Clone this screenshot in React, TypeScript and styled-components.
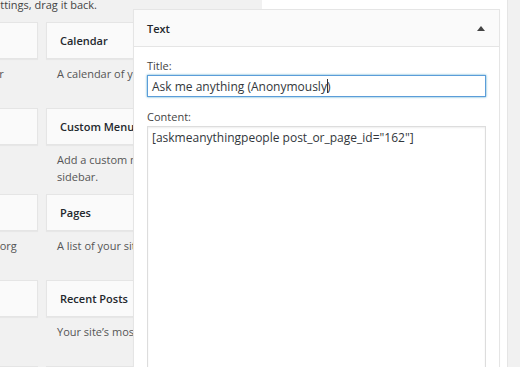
import styled, { createGlobalStyle } from 'styled-components';

const GlobalStyle = createGlobalStyle`
  html, body { margin: 0; padding: 0; }
  body {
    font-family: "Open Sans", "Liberation Sans", sans-serif;
    font-size: 11px;
    color: #444;
  }
`;

type Widget = { title: string; desc: string };

const rows: [Widget, Widget][] = [
  [
    { title: 'Archives', desc: 'A monthly archive of your site’s Posts.' },
    { title: 'Calendar', desc: 'A calendar of your site’s Posts.' },
  ],
  [
    { title: 'Categories', desc: 'A list or dropdown of categories.' },
    { title: 'Custom Menu', desc: 'Add a custom menu to your sidebar.' },
  ],
  [
    { title: 'Meta', desc: 'Login, RSS, & WordPress.org links.' },
    { title: 'Pages', desc: 'A list of your site’s Pages.' },
  ],
  [
    { title: 'Recent Comments', desc: 'Your site’s most recent comments.' },
    { title: 'Recent Posts', desc: 'Your site’s most recent Posts.' },
  ],
  [
    { title: 'RSS', desc: 'Entries from any RSS or Atom feed.' },
    { title: 'Search', desc: 'A search form for your site.' },
  ],
];

export default function App() {
  return (
    <>
      <GlobalStyle />
      <Screen>
        <Available>
          <Intro>
            <span>To activate a widget drag it to a sidebar. To deactivate a widget and delete its settings, drag it back.</span>
          </Intro>
          <WidgetGrid>
            {rows.flat().map((w) => (
              <WidgetItem key={w.title}>
                <WidgetTop>
                  <WidgetName>{w.title}</WidgetName>
                </WidgetTop>
                <Description>{w.desc}</Description>
              </WidgetItem>
            ))}
          </WidgetGrid>
        </Available>

        <Sidebar>
          <OpenWidget>
            <PanelHeader>
              <PanelTitle>Text</PanelTitle>
              <ToggleArrow />
            </PanelHeader>
            <PanelBody>
              <Label>Title:</Label>
              <TitleField>
                Ask me anything (Anonymously
                <Caret />)
              </TitleField>
              <Label>Content:</Label>
              <ContentField>[askmeanythingpeople post_or_page_id="162"]</ContentField>
            </PanelBody>
          </OpenWidget>
        </Sidebar>
      </Screen>
    </>
  );
}

const Screen = styled.div`
  display: flex;
  align-items: flex-start;
  width: 520px;
  height: 367px;
  overflow: hidden;
  background: #f1f1f1;
`;

const Available = styled.div`
  flex: none;
  width: 365px;
  margin-left: -139px;
`;

const Intro = styled.p`
  display: flex;
  justify-content: flex-end;
  margin: -4px 0 0;
  padding-right: 129px;
  line-height: 17px;
  white-space: nowrap;
  color: #444;
`;

const WidgetGrid = styled.div`
  display: grid;
  grid-template-columns: 177px 180px;
  grid-auto-rows: 86px;
  column-gap: 8px;
  margin-top: 9px;
`;

const WidgetItem = styled.div`
  display: flex;
  flex-direction: column;
`;

const WidgetTop = styled.div`
  height: 35px;
  display: flex;
  align-items: center;
  padding: 0 13px;
  background: #fafafa;
  border: 1px solid #e5e5e5;
  box-shadow: 0 1px 1px rgba(0, 0, 0, 0.04);
`;

const WidgetName = styled.h3`
  margin: 0;
  font-size: 11px;
  font-weight: 600;
  color: #23282d;
  white-space: nowrap;
`;

const Description = styled.p`
  margin: 6px 0 0;
  padding: 0 11px;
  line-height: 17px;
  color: #555;
`;

const Sidebar = styled.div`
  flex: none;
  width: 245px;
  height: 100%;
  margin-left: 36px;
  background: #fff;
  border-right: 1px solid #e5e5e5;
`;

const OpenWidget = styled.div`
  position: relative;
  margin: 9px 7px 0 -129px;
  background: #fff;
  border: 1px solid #e5e5e5;
  box-shadow: 0 1px 1px rgba(0, 0, 0, 0.04);
`;

const PanelHeader = styled.div`
  height: 36px;
  display: flex;
  align-items: center;
  justify-content: space-between;
  padding: 0 14px 0 13px;
  background: #fafafa;
  border-bottom: 1px solid #e5e5e5;
`;

const PanelTitle = styled.h3`
  margin: 0;
  font-size: 11px;
  font-weight: 600;
  color: #23282d;
`;

const ToggleArrow = styled.span`
  width: 0;
  height: 0;
  border-left: 4px solid transparent;
  border-right: 4px solid transparent;
  border-bottom: 5px solid #444;
`;

const PanelBody = styled.div`
  padding: 10px 13px 0;
  height: 330px;
`;

const Label = styled.div`
  line-height: 17px;
  color: #444;
`;

const TitleField = styled.div`
  box-sizing: border-box;
  height: 22px;
  margin: 1px 0 11px;
  padding: 0 4px;
  display: flex;
  align-items: center;
  font-size: 12px;
  border: 1px solid #5b9dd9;
  box-shadow: 0 0 2px rgba(30, 140, 190, 0.8);
  color: #32373c;
  white-space: pre;
`;

const Caret = styled.span`
  display: inline-block;
  width: 1px;
  height: 14px;
  margin-right: -1px;
  background: #333;
`;

const ContentField = styled.div`
  box-sizing: border-box;
  height: 260px;
  margin-top: 1px;
  padding: 2px 4px;
  font-size: 12px;
  line-height: 18px;
  border: 1px solid #ddd;
  box-shadow: inset 0 1px 2px rgba(0, 0, 0, 0.07);
  color: #32373c;
`;
